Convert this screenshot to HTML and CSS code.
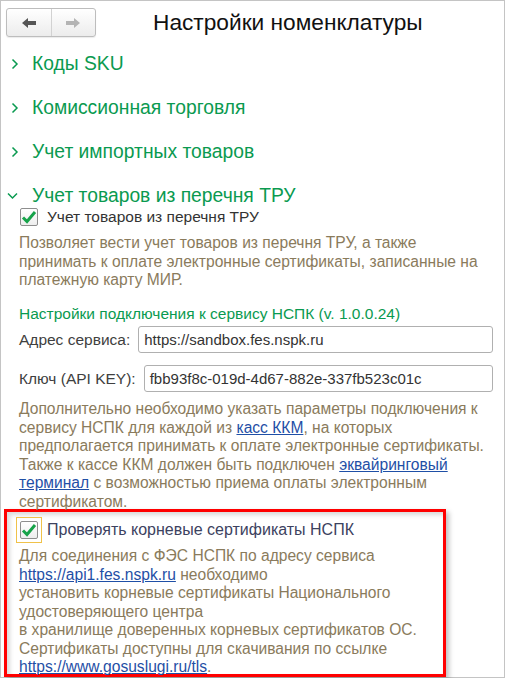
FILE: index.html
```html
<!DOCTYPE html>
<html lang="ru">
<head>
<meta charset="utf-8">
<title>Настройки номенклатуры</title>
<link rel="stylesheet" href="styles.css">
</head>
<body>
<div class="window">
  <header class="head">
    <div class="nav">
      <button class="nav-btn back" type="button" aria-label="Назад">
        <svg width="14" height="10" viewBox="0 0 14 10"><polygon points="0,5 6,0 6,3 14,3 14,7 6,7 6,10" fill="#555"/></svg>
      </button>
      <button class="nav-btn fwd" type="button" aria-label="Вперед">
        <svg width="14" height="10" viewBox="0 0 14 10"><polygon points="14,5 8,0 8,3 0,3 0,7 8,7 8,10" fill="#b4b4b4"/></svg>
      </button>
    </div>
    <h1 class="title">Настройки номенклатуры</h1>
  </header>

  <main class="content">
    <section class="group">
      <div class="group-head">
        <svg class="chev" width="8" height="12" viewBox="0 0 8 12"><polyline points="1.5,1.5 6,6 1.5,10.5" fill="none" stroke="#0a9a50" stroke-width="1.5"/></svg>
        <span>Коды SKU</span>
      </div>
    </section>
    <section class="group">
      <div class="group-head">
        <svg class="chev" width="8" height="12" viewBox="0 0 8 12"><polyline points="1.5,1.5 6,6 1.5,10.5" fill="none" stroke="#0a9a50" stroke-width="1.5"/></svg>
        <span>Комиссионная торговля</span>
      </div>
    </section>
    <section class="group">
      <div class="group-head">
        <svg class="chev" width="8" height="12" viewBox="0 0 8 12"><polyline points="1.5,1.5 6,6 1.5,10.5" fill="none" stroke="#0a9a50" stroke-width="1.5"/></svg>
        <span>Учет импортных товаров</span>
      </div>
    </section>
    <section class="group open">
      <div class="group-head">
        <svg class="chev down" width="11" height="8" viewBox="0 0 11 8"><polyline points="1,1.5 5.5,6 10,1.5" fill="none" stroke="#0a9a50" stroke-width="1.5"/></svg>
        <span>Учет товаров из перечня ТРУ</span>
      </div>
      <div class="group-body">
        <label class="check-row">
          <span class="checkbox">
            <svg width="16" height="14" viewBox="0 0 16 14"><polyline points="2,7.5 6,11.5 14,2" fill="none" stroke="#17a34a" stroke-width="3"/></svg>
          </span>
          <span class="check-label">Учет товаров из перечня ТРУ</span>
        </label>
        <p class="note">Позволяет вести учет товаров из перечня ТРУ, а также<br>принимать к оплате электронные сертификаты, записанные на<br>платежную карту МИР.</p>

        <h2 class="subhead">Настройки подключения к сервису НСПК (v. 1.0.0.24)</h2>
        <div class="field">
          <span class="field-label">Адрес сервиса:</span>
          <span class="input">https://sandbox.fes.nspk.ru</span>
        </div>
        <div class="field">
          <span class="field-label">Ключ (API KEY):</span>
          <span class="input">fbb93f8c-019d-4d67-882e-337fb523c01c</span>
        </div>
        <p class="note">Дополнительно необходимо указать параметры подключения к<br>сервису НСПК для каждой из <a href="#">касс ККМ</a>, на которых<br>предполагается принимать к оплате электронные сертификаты.<br>Также к кассе ККМ должен быть подключен <a href="#">эквайринговый<br>терминал</a> с возможностью приема оплаты электронным<br>сертификатом.</p>

        <div class="highlight">
          <label class="check-row focus">
            <span class="focus-ring">
              <span class="checkbox">
                <svg width="16" height="14" viewBox="0 0 16 14"><polyline points="2,7.5 6,11.5 14,2" fill="none" stroke="#17a34a" stroke-width="3"/></svg>
              </span>
            </span>
            <span class="check-label dark">Проверять корневые сертификаты НСПК</span>
          </label>
          <p class="note tight">Для соединения с ФЭС НСПК по адресу сервиса<br><a href="#">https://api1.fes.nspk.ru</a> необходимо<br>установить корневые сертификаты Национального<br>удостоверяющего центра<br>в хранилище доверенных корневых сертификатов ОС.<br>Сертификаты доступны для скачивания по ссылке<br><a href="#">https://www.gosuslugi.ru/tls</a>.</p>
        </div>
      </div>
    </section>
  </main>
</div>
</body>
</html>
```

FILE: styles.css
```css
* { box-sizing: border-box; }

html, body {
  margin: 0;
  padding: 0;
  background: #fff;
}

body {
  font-family: "Liberation Sans", Arial, sans-serif;
  color: #333;
}

.window {
  width: 505px;
  height: 678px;
  border: 1px solid #c4c4c4;
  background: #fff;
}

.head {
  display: flex;
  align-items: center;
  padding: 7px 0 0 5px;
}

.nav {
  display: flex;
  width: 90px;
  height: 29px;
  border: 1px solid #bdbdbd;
  border-radius: 3px;
  background: linear-gradient(#ffffff, #ececec);
  box-shadow: 0 1px 1px rgba(0,0,0,0.08);
}

.nav-btn {
  flex: 1;
  display: flex;
  align-items: center;
  justify-content: center;
  border: 0;
  padding: 0;
  background: transparent;
}

.nav-btn.back {
  border-right: 1px solid #d2d2d2;
}

.title {
  margin: 0 0 0 57px;
  font-size: 22.7px;
  font-weight: normal;
  color: #111;
  line-height: 29px;
}

.content {
  padding: 15px 11px 0 0;
}

.group-head {
  display: flex;
  align-items: center;
  height: 24px;
  margin-bottom: 20px;
  font-size: 19.3px;
  color: #0a9a50;
}

.group-head .chev {
  margin-left: 10px;
  margin-right: 13px;
}

.group-head .chev.down {
  margin-left: 6px;
  margin-right: 14px;
}

.group.open .group-head {
  margin-bottom: 0;
}

.group-body {
  padding-left: 18px;
}

.check-row {
  display: flex;
  align-items: center;
  height: 18px;
}

.checkbox {
  display: flex;
  align-items: center;
  justify-content: center;
  width: 18px;
  height: 18px;
  margin-left: 1px;
  border: 1px solid #8e8e8e;
  border-radius: 2px;
  background: linear-gradient(#ffffff, #eeeeee);
}

.check-label {
  margin-left: 9px;
  font-size: 15.5px;
  color: #333;
}

.check-label.dark {
  color: #3c4260;
  margin-left: 5px;
  font-size: 16px;
}

.note {
  margin: 8px 0 0;
  font-size: 15.6px;
  line-height: 18.5px;
  color: #8a7b5c;
  white-space: nowrap;
}

.note a {
  color: #1f4fa6;
  text-decoration: underline;
}

.subhead {
  margin: 15px 0 0;
  font-size: 15.5px;
  font-weight: normal;
  line-height: 18.5px;
  color: #0a9a50;
}

.field {
  display: flex;
  align-items: center;
  gap: 8px;
  margin-top: 3px;
  font-size: 15.5px;
}

.field + .field {
  margin-top: 12px;
}

.field-label {
  color: #404040;
  white-space: nowrap;
}

.input {
  flex: 1;
  height: 27px;
  line-height: 25px;
  padding: 0 5px;
  border: 1px solid #b0b0b0;
  border-radius: 3px;
  color: #333;
  font-size: 15px;
  white-space: nowrap;
  overflow: hidden;
}

.highlight {
  width: 442px;
  margin: -2px 0 0 -15px;
  padding: 5px 0 0 12px;
  border: 3px solid #ff0000;
  box-shadow: 3px 3px 5px rgba(0,0,0,0.25), inset 3px 3px 4px rgba(0,0,0,0.15);
}

.check-row.focus {
  height: 26px;
  margin-left: -3px;
}

.focus-ring {
  display: flex;
  align-items: center;
  justify-content: center;
  width: 26px;
  height: 26px;
  border: 1px solid #f0c24a;
}

.focus-ring .checkbox {
  margin-left: 0;
}

.note.tight {
  margin: 4px 0 -3px;
  line-height: 18.5px;
}
```
